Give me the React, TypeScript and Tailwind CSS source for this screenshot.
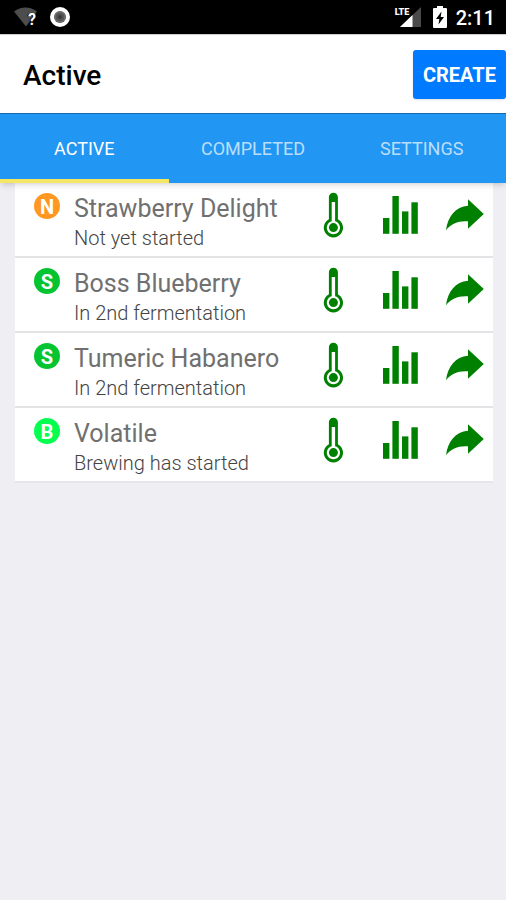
import React, { useState } from "react";
import clsx from "clsx";

type Stage = "new" | "second" | "brewing";

interface Brew {
  id: number;
  name: string;
  status: string;
  stage: Stage;
}

const brews: Brew[] = [
  { id: 1, name: "Strawberry Delight", status: "Not yet started", stage: "new" },
  { id: 2, name: "Boss Blueberry", status: "In 2nd fermentation", stage: "second" },
  { id: 3, name: "Tumeric Habanero", status: "In 2nd fermentation", stage: "second" },
  { id: 4, name: "Volatile", status: "Brewing has started", stage: "brewing" },
];

const stageLetter: Record<Stage, string> = {
  new: "N",
  second: "S",
  brewing: "B",
};

const stageColor: Record<Stage, string> = {
  new: "bg-[#ff9722]",
  second: "bg-[#05c432]",
  brewing: "bg-[#05ff50]",
};

const tabs = ["Active", "Completed", "Settings"];

const ThermometerIcon = () => (
  <svg viewBox="0 0 40 48" className="w-10 h-12" aria-hidden="true">
    <path
      fill="#008000"
      d="M15.900 6.200a4.500 4.500 0 0 1 9 0v22.100a9.600 9.600 0 1 1-9 0z"
    />
    <path
      fill="#fff"
      d="M18.700 11h3.400v19.300a6.600 6.600 0 1 1-3.400 0z"
    />
    <circle cx="20.400" cy="36.600" r="4.500" fill="#008000" />
  </svg>
);

const ChartIcon = () => (
  <svg viewBox="0 0 40 48" className="w-10 h-12" fill="#008000" aria-hidden="true">
    <rect x="4" y="27" width="6.400" height="15.800" />
    <rect x="13.400" y="5" width="6.400" height="37.800" />
    <rect x="23" y="20.400" width="6.400" height="22.400" />
    <rect x="32.400" y="11.300" width="6.400" height="31.500" />
  </svg>
);

const ShareIcon = () => (
  <svg viewBox="0 0 40 48" className="w-10 h-12" fill="#008000" aria-hidden="true">
    <path d="M23 8.300 38.800 23 23 37.800V30.300C13.500 29.600 6.500 32.200 1 39.200 2.800 25.500 10.500 15.600 23 14.700z" />
  </svg>
);

const StatusBar = () => (
  <div className="flex h-[34px] items-center justify-between bg-black pl-[14px] pr-[11px] text-white">
    <div className="flex items-center gap-3">
      <div className="relative">
        <svg viewBox="0 0 24 20" className="h-5 w-6" aria-hidden="true">
          <path fill="#4d4d4d" d="M0 4.500C7-.8 16-.8 23 4.500L12 19.500z" />
        </svg>
        <span className="absolute left-[14px] top-[4px] text-[16px] font-bold leading-[18px] [text-shadow:-1px_0_#000]">
          ?
        </span>
      </div>
      <svg viewBox="0 0 20 20" className="size-5" aria-hidden="true">
        <circle cx="10" cy="10" r="10" fill="#fff" />
        <circle cx="10" cy="10" r="6" fill="#555" />
        <circle cx="10" cy="10" r="5" fill="none" stroke="#777" />
        <circle cx="10" cy="10" r="2" fill="#3a3a3a" />
      </svg>
    </div>
    <div className="flex items-center">
      <div className="relative mr-3">
        <svg viewBox="0 0 26 22" className="h-[22px] w-[26px]" aria-hidden="true">
          <path fill="#4a4a4a" d="M26 1v20H5z" />
          <path fill="#fff" d="M17.500 9.100V21H5z" />
        </svg>
        <span className="absolute left-0 top-0 bg-black text-[9px] font-black leading-[12px]">
          LTE
        </span>
      </div>
      <svg viewBox="0 0 14 22" className="mr-[9px] h-[22px] w-[14px]" aria-hidden="true">
        <path fill="#fff" d="M4 0h6v2h3a1 1 0 0 1 1 1v18a1 1 0 0 1-1 1H1a1 1 0 0 1-1-1V3a1 1 0 0 1 1-1h3z" />
        <path fill="#000" d="M8.500 5.500 3 13h3.300L5.500 18.500 11 11H7.700z" />
      </svg>
      <span className="pt-[2px] text-[20px] font-medium leading-[24px]">2:11</span>
    </div>
  </div>
);

const BrewRow: React.FC<{ brew: Brew }> = ({ brew }) => (
  <li className="flex h-[73px] items-start bg-white pl-[19px] pr-2">
    <span
      className={clsx(
        "mt-[10px] flex size-[26px] shrink-0 items-center justify-center rounded-full pt-[2px] text-[20px] font-bold leading-[24px] text-white",
        stageColor[brew.stage]
      )}
    >
      {stageLetter[brew.stage]}
    </span>
    <div className="ml-[14px] mt-[10px] min-w-0 flex-1 whitespace-nowrap">
      <h2 className="text-[25px] leading-[31px] text-[#707070]">{brew.name}</h2>
      <p className="text-[20px] font-light leading-[28px] text-[#444]">{brew.status}</p>
    </div>
    <div className="mt-2 flex gap-[26px]">
      <button type="button" aria-label={`Temperature of ${brew.name}`}>
        <ThermometerIcon />
      </button>
      <button type="button" aria-label={`Chart of ${brew.name}`}>
        <ChartIcon />
      </button>
      <button type="button" aria-label={`Share ${brew.name}`}>
        <ShareIcon />
      </button>
    </div>
  </li>
);

const App: React.FC = () => {
  const [activeTab, setActiveTab] = useState("Active");

  return (
    <div className="min-h-screen bg-[#eeeef3] font-[Roboto,sans-serif]">
      <StatusBar />
      <header className="flex h-[79px] items-center justify-between border-t border-[#ccc] bg-white pl-[23px]">
        <h1 className="pt-1 text-[28px] font-medium leading-[32px] text-black">Active</h1>
        <button
          type="button"
          className="h-[49px] rounded-[3px] bg-[#007aff] px-[10px] pt-[2px] text-[20px] font-bold uppercase text-white shadow"
        >
          Create
        </button>
      </header>
      <nav className="relative grid h-[70px] grid-cols-3 border-t border-[#1769aa] bg-[#2196f3] shadow-md">
        {tabs.map((tab) => (
          <button
            key={tab}
            type="button"
            onClick={() => setActiveTab(tab)}
            className={clsx(
              "border-b-4 pt-1 text-[18px] uppercase",
              tab === activeTab
                ? "border-[#f5e663] text-white"
                : "border-transparent text-white/70"
            )}
          >
            {tab}
          </button>
        ))}
      </nav>
      <ul className="ml-[15px] mr-[13px] flex flex-col gap-[2px] border-b-2 border-[#e6e6ea] bg-[#e4e4e6]">
        {brews.map((brew) => (
          <BrewRow key={brew.id} brew={brew} />
        ))}
      </ul>
    </div>
  );
};

export default App;
